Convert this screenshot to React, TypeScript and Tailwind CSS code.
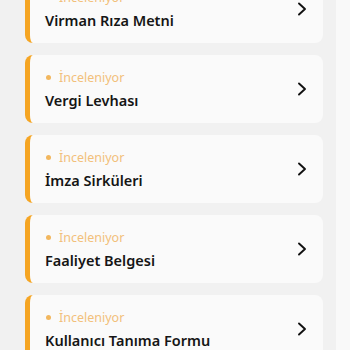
import React from "react";

const items = [
  "Virman Rıza Metni",
  "Vergi Levhası",
  "İmza Sirküleri",
  "Faaliyet Belgesi",
  "Kullanıcı Tanıma Formu",
];

function Chevron() {
  return (
    <svg width="10" height="14" viewBox="0 0 10 14" fill="none">
      <polyline points="2,1.5 8,7 2,12.5" stroke="#111" strokeWidth="1.9" strokeLinecap="round" strokeLinejoin="round" />
    </svg>
  );
}

export default function App() {
  return (
    <div className="flex w-[350px] h-[350px] overflow-hidden bg-[#f9f9f9]" style={{ fontFamily: '"Noto Sans", "Open Sans", sans-serif' }}>
      <div className="w-[336px] h-full bg-[#f1f1f1] pl-[25px] pr-[13px]">
        <div className="flex flex-col gap-[12px] mt-[-25px]">
          {items.map((t) => (
            <div key={t} className="h-[68px] rounded-[8px] bg-[#fafafa] border-l-[5px] border-[#f5a523] flex items-center pl-[15px] pr-[16px]">
              <div className="flex-1 flex flex-col">
                <div className="flex items-center text-[12.5px] leading-[18px] text-[#f2c07a] mt-[1px]">
                  <span className="w-[5px] h-[5px] rounded-full bg-[#f2b75e] mr-[8px] ml-[1px]" />
                  İnceleniyor
                </div>
                <div className="text-[14.5px] leading-[22px] font-semibold text-[#151515] mt-[2px]">{t}</div>
              </div>
              <Chevron />
            </div>
          ))}
        </div>
      </div>
    </div>
  );
}
